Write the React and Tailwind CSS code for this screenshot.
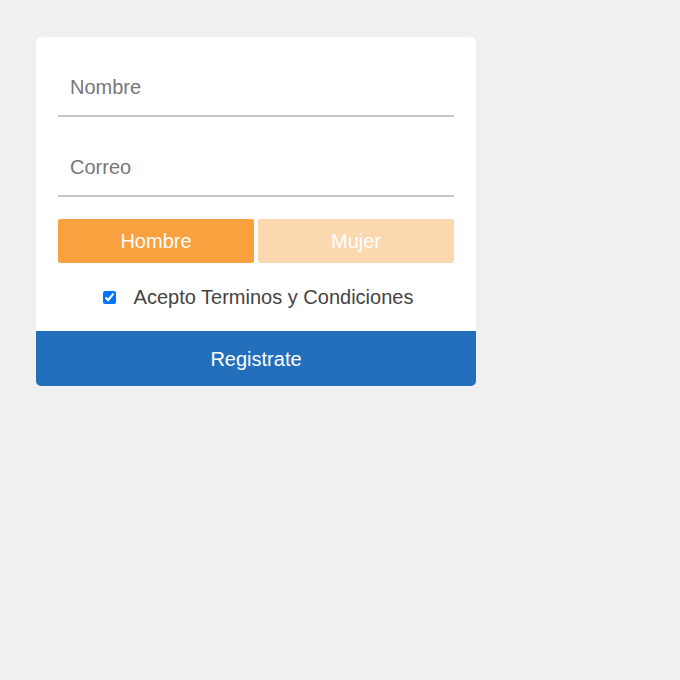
export default function App() {
  return (
    <div className="min-h-[680px] w-full bg-[#f0f0f0] pt-[37px] pl-[36px]" style={{ fontFamily: '"Liberation Sans", Arial, sans-serif' }}>
      <div className="w-[440px] bg-white rounded-[5px] overflow-hidden">
        <div className="px-[22px] pt-[21px]">
          <input
            type="text"
            placeholder="Nombre"
            className="block w-full h-[59px] border-b-2 border-[#c8c8c8] px-[12px] pt-[1px] text-[20px] text-[#555] placeholder:text-[#777] outline-none bg-transparent"
          />
          <input
            type="text"
            placeholder="Correo"
            className="block w-full h-[59px] mt-[21px] border-b-2 border-[#c8c8c8] px-[12px] pt-[1px] text-[20px] text-[#555] placeholder:text-[#777] outline-none bg-transparent"
          />
          <div className="flex gap-[4px] mt-[22px]">
            <button className="flex-1 h-[44px] rounded-[2px] bg-[#f9a13f] text-white text-[20px]">Hombre</button>
            <button className="flex-1 h-[44px] rounded-[2px] bg-[#fcd8b0] text-white text-[20px]">Mujer</button>
          </div>
          <div className="h-[68px] flex items-center justify-center pl-[4px]">
            <input type="checkbox" defaultChecked className="m-0 mr-[18px] w-[13px] h-[13px]" />
            <span className="text-[20px] text-[#444]">Acepto Terminos y Condiciones</span>
          </div>
        </div>
        <button className="block w-full h-[55px] bg-[#246fbb] text-white text-[20px]">Registrate</button>
      </div>
    </div>
  );
}
